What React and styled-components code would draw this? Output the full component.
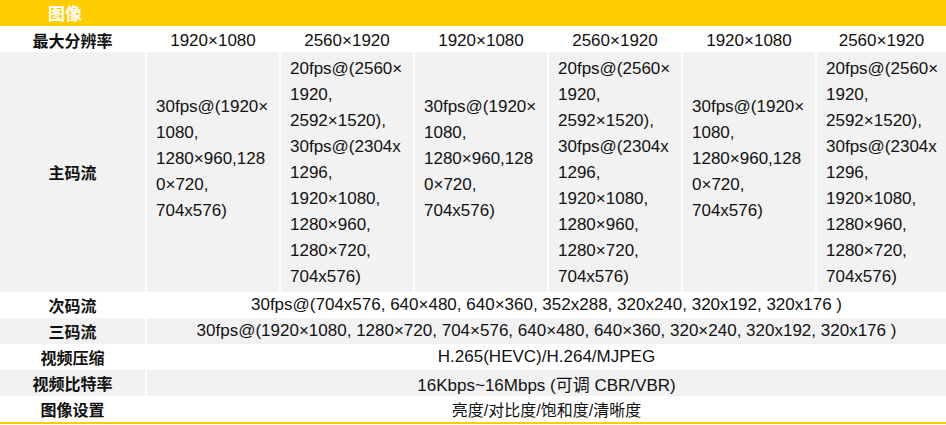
import styled, {createGlobalStyle} from "styled-components";

const GlobalStyle = createGlobalStyle`
  html, body {
    margin: 0;
    padding: 0;
    background: #fff;
  }
  body {
    font-family: "Liberation Sans", "Noto Sans CJK SC", sans-serif;
    color: #111;
  }
`;

const resolutions = ["1920×1080", "2560×1920", "1920×1080", "2560×1920", "1920×1080", "2560×1920"];

const mainA = ["30fps@(1920×", "1080,", "1280×960,128", "0×720,", "704x576)"];
const mainB = [
    "20fps@(2560×", "1920,", "2592×1520),", "30fps@(2304x", "1296,",
    "1920×1080,", "1280×960,", "1280×720,", "704x576)",
];

const spanRows = [
    {label: "次码流", text: "30fps@(704x576, 640×480, 640×360, 352x288, 320x240, 320x192, 320x176 )", shade: false},
    {label: "三码流", text: "30fps@(1920×1080, 1280×720, 704×576, 640×480, 640×360, 320×240, 320x192, 320x176 )", shade: true},
    {label: "视频压缩", text: "H.265(HEVC)/H.264/MJPEG", shade: false},
    {label: "视频比特率", text: "16Kbps~16Mbps (可调 CBR/VBR)", shade: true},
    {label: "图像设置", text: "亮度/对比度/饱和度/清晰度", shade: false, cjk: true},
];

export default function App() {
    return (
        <>
            <GlobalStyle/>
            <Sheet>
                <Header>图像</Header>
                <Table>
                    <Label $nudge>最大分辨率</Label>
                    {resolutions.map((r, i) => (
                        <Cell key={i}>{r}</Cell>
                    ))}

                    <Label $shade>主码流</Label>
                    {resolutions.map((r, i) => (
                        <StreamCell key={i} $top={i % 2 === 0 ? 42 : 4}>
                            {(i % 2 === 0 ? mainA : mainB).map((line, j) => (
                                <div key={j}>{line}</div>
                            ))}
                        </StreamCell>
                    ))}

                    {spanRows.map((row) => (
                        <Row key={row.label}>
                            <Label $shade={row.shade}>{row.label}</Label>
                            <SpanCell $shade={row.shade} $cjk={row.cjk}>{row.text}</SpanCell>
                        </Row>
                    ))}
                </Table>
            </Sheet>
        </>
    );
}

const Sheet = styled.div`
  width: 946px;
  height: 425px;
  overflow: hidden;
`;

const Header = styled.div`
  height: 26px;
  background: #ffcc00;
  color: #fff;
  font-family: "Noto Sans CJK SC", sans-serif;
  font-weight: 700;
  font-size: 17px;
  line-height: 26px;
  padding-left: 48px;
`;

const Table = styled.div`
  display: grid;
  grid-template-columns: 145px repeat(5, 132px) 1fr;
  grid-template-rows: 26px 240px repeat(5, 26px);
  column-gap: 2px;
  background: #fff;
  border-bottom: 2px solid #ffcc00;
`;

const Row = styled.div`
  display: contents;
`;

const Label = styled.div`
  display: flex;
  align-items: center;
  justify-content: center;
  padding-top: ${(p) => (p.$nudge ? "2px" : "0")};
  background: ${(p) => (p.$shade ? "#f2f2f2" : "#fff")};
  font-family: "Noto Sans CJK SC", sans-serif;
  font-weight: 700;
  font-size: 16px;
`;

const Cell = styled.div`
  display: flex;
  align-items: center;
  justify-content: center;
  padding-top: 3px;
  font-size: 17px;
  line-height: 26px;
`;

const StreamCell = styled.div`
  box-sizing: border-box;
  background: #f2f2f2;
  padding: ${(p) => p.$top}px 0 0 9px;
  font-size: 17px;
  line-height: 26px;
  white-space: nowrap;
  overflow: hidden;
`;

const SpanCell = styled.div`
  grid-column: 2 / -1;
  display: flex;
  align-items: center;
  justify-content: center;
  background: ${(p) => (p.$shade ? "#f2f2f2" : "#fff")};
  font-size: ${(p) => (p.$cjk ? "16px" : "17px")};
  white-space: nowrap;
`;
